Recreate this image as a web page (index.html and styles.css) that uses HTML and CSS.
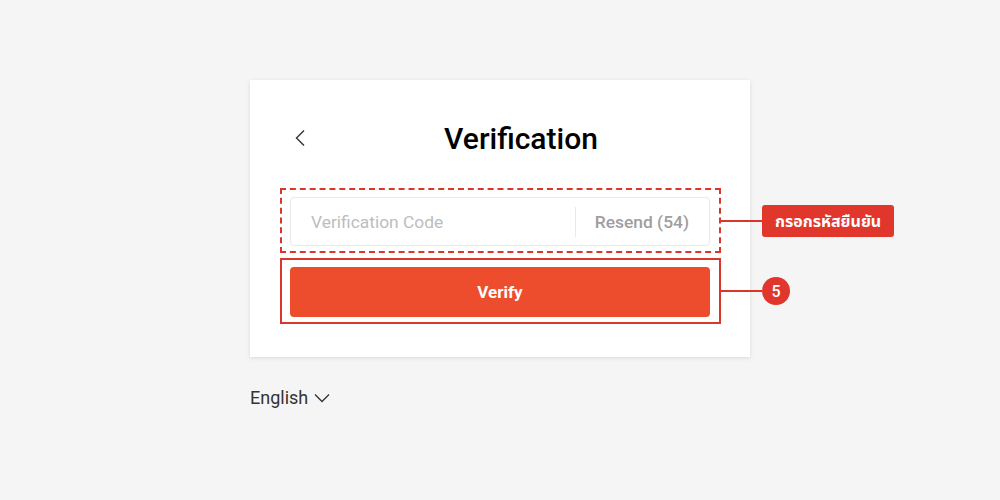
FILE: index.html
```html
<!DOCTYPE html>
<html>
<head>
<meta charset="utf-8">
<link rel="stylesheet" href="styles.css">
</head>
<body>
<div class="page">
  <div class="card">
    <div class="header">
      <span class="back">
        <svg width="12" height="18" viewBox="0 0 12 18"><path d="M10 1.5 L2.5 9 L10 16.5" fill="none" stroke="#333" stroke-width="1.4"/></svg>
      </span>
      <h1 class="title">Verification</h1>
    </div>
    <div class="field-wrap">
      <div class="field">
        <span class="placeholder">Verification Code</span>
        <span class="divider"></span>
        <span class="resend">Resend (54)</span>
      </div>
      <div class="annot dashed">
        <span class="connector"></span>
        <span class="tag">กรอกรหัสยืนยัน</span>
      </div>
    </div>
    <div class="btn-wrap">
      <button class="verify">Verify</button>
      <div class="annot solid">
        <span class="connector"></span>
        <span class="num">5</span>
      </div>
    </div>
  </div>
  <div class="lang">
    <span>English</span>
    <svg width="16" height="10" viewBox="0 0 16 10"><path d="M1 1.5 L8 8.5 L15 1.5" fill="none" stroke="#333" stroke-width="1.3"/></svg>
  </div>
</div>
</body>
</html>
```
FILE: styles.css
```css
* { box-sizing: border-box; }
html, body { margin: 0; padding: 0; }
body {
  background: #f5f5f5;
  font-family: Roboto, "Noto Sans", "Noto Sans Thai", sans-serif;
  width: 1000px;
  height: 500px;
  overflow: hidden;
}
.page {
  display: flex;
  flex-direction: column;
  align-items: center;
  padding-top: 80px;
}
.card {
  width: 500px;
  background: #fff;
  padding: 40px 40px 40px;
  box-shadow: 0 1px 4px rgba(0,0,0,0.12);
}
.header {
  position: relative;
  height: 36px;
  display: flex;
  align-items: center;
  justify-content: center;
}
.back {
  position: absolute;
  left: 4px;
  top: 9px;
  display: flex;
}
.title {
  margin: 0;
  font-size: 30px;
  font-weight: 500;
  color: #000;
  line-height: 36px;
  padding-left: 42px;
  position: relative;
  top: 1px;
}
.field-wrap {
  position: relative;
  margin-top: 41px;
}
.field {
  height: 49px;
  border: 1px solid #e8e8e8;
  border-radius: 4px;
  display: flex;
  align-items: center;
  padding: 0 20px;
}
.placeholder {
  flex: 1;
  color: #bdbdbd;
  font-size: 17.4px;
}
.divider {
  width: 1px;
  height: 30px;
  background: #eaeaea;
  margin-right: 19px;
}
.resend {
  color: #9e9e9e;
  font-size: 17.4px;
  font-weight: 500;
}
.btn-wrap {
  position: relative;
  margin-top: 21px;
}
.verify {
  display: block;
  width: 100%;
  height: 50px;
  border: 0;
  border-radius: 4px;
  background: #ee4d2d;
  color: #fff;
  font-family: Roboto, sans-serif;
  font-size: 17px;
  font-weight: 700;
}
.annot {
  position: absolute;
  left: -10px;
  right: -11px;
}
.dashed {
  top: -9px;
  bottom: -7px;
  border: 2px dashed #d9372b;
}
.solid {
  top: -9px;
  bottom: -7px;
  border: 2px solid #d9372b;
}
.connector {
  position: absolute;
  left: 100%;
  top: 50%;
  width: 43px;
  height: 2px;
  margin-top: -1px;
  background: #d9372b;
}
.tag {
  position: absolute;
  left: calc(100% + 43px);
  top: 50%;
  transform: translateY(-50%);
  background: #e0362b;
  color: #fff;
  font-family: "Noto Sans", "Noto Sans Thai", sans-serif;
  font-size: 16px;
  font-weight: 700;
  border-radius: 3px;
  height: 32px;
  line-height: 32px;
  padding: 0 13px;
  white-space: nowrap;
}
.num {
  position: absolute;
  left: calc(100% + 43px);
  top: 50%;
  transform: translateY(-50%);
  width: 28px;
  height: 28px;
  border-radius: 50%;
  background: #e0362b;
  color: #fff;
  font-size: 16px;
  font-weight: 500;
  display: flex;
  align-items: center;
  justify-content: center;
}
.lang {
  width: 500px;
  margin-top: 30px;
  display: flex;
  align-items: center;
  gap: 6px;
  color: #333;
  font-size: 18px;
}
```
